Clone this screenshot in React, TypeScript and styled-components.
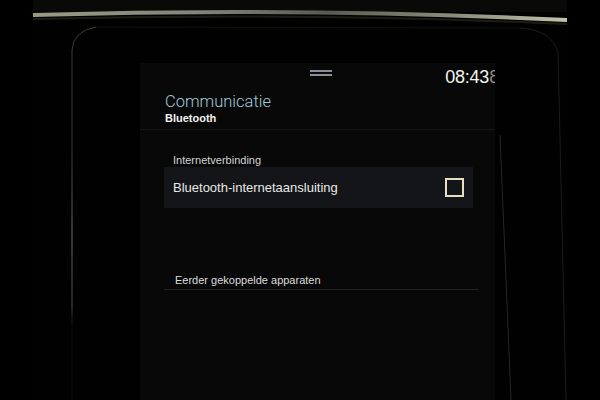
import React from "react";
import styled, { createGlobalStyle } from "styled-components";

const GlobalStyle = createGlobalStyle`
  html, body {
    margin: 0;
    padding: 0;
    background: #000;
  }
  body {
    font-family: "Liberation Sans", Arial, sans-serif;
  }
`;

const App = () => {
  return (
    <>
      <GlobalStyle />
      <Page>
        <Photo>
          <Bezel viewBox="33 0 534 400" aria-hidden>
            <defs>
              <linearGradient id="glare" x1="0" x2="1" y1="0" y2="0">
                <stop offset="0" stopColor="#9a9a84" />
                <stop offset="0.3" stopColor="#85857a" />
                <stop offset="0.55" stopColor="#5a5a50" />
                <stop offset="0.85" stopColor="#9a9a86" />
                <stop offset="1" stopColor="#c4c4ac" />
              </linearGradient>
              <linearGradient id="edge" x1="0" x2="0" y1="0" y2="1">
                <stop offset="0" stopColor="#3a3a34" />
                <stop offset="0.35" stopColor="#3a3a34" />
                <stop offset="0.55" stopColor="#6a6a62" />
                <stop offset="0.75" stopColor="#4a4a44" />
                <stop offset="0.8" stopColor="#0c0c0c" />
              </linearGradient>
            </defs>
            <rect x="33" y="0" width="534" height="12" fill="#090907" />
            <path d="M33 15 Q300 7 567 20" stroke="url(#glare)" strokeWidth="4" fill="none" />
            <path d="M33 19 Q300 12 567 24" stroke="#1c1c17" strokeWidth="2" fill="none" />
            <path d="M72 400 L72 50 Q73 31 96 27" stroke="url(#edge)" strokeWidth="1" fill="none" />
            <path d="M96 27 L520 28" stroke="#111110" strokeWidth="1" fill="none" />
            <path
              d="M520 28 Q552 30 558 52 L566 400"
              stroke="#1c1c1a"
              strokeWidth="1"
              fill="none"
            />
            <path d="M500 135 L511 400" stroke="#262622" strokeWidth="1" fill="none" />
          </Bezel>
          <Screen>
            <TopBar>
              <span />
              <Handle>
                <i />
                <i />
              </Handle>
              <Clock>
                08:43<Faded>8</Faded>
              </Clock>
            </TopBar>
            <Header>
              <Title>Communicatie</Title>
              <Subtitle>Bluetooth</Subtitle>
            </Header>
            <Section>
              <GroupLabel>Internetverbinding</GroupLabel>
              <Row>
                <RowText>Bluetooth-internetaansluiting</RowText>
                <Checkbox />
              </Row>
              <ListHeader>Eerder gekoppelde apparaten</ListHeader>
            </Section>
          </Screen>
        </Photo>
      </Page>
    </>
  );
};

export default App;

const Page = styled.div`
  width: 600px;
  height: 400px;
  display: flex;
  justify-content: center;
  background: #000;
  overflow: hidden;
`;

const Photo = styled.div`
  position: relative;
  width: 534px;
  height: 400px;
  box-sizing: border-box;
  padding: 63px 0 0 107px;
  background: #010101;
  overflow: hidden;
`;

const Bezel = styled.svg`
  position: absolute;
  left: 0;
  top: 0;
  width: 534px;
  height: 400px;
  pointer-events: none;
`;

const Screen = styled.div`
  position: relative;
  width: 355px;
  height: 337px;
  background: #080808;
  display: flex;
  flex-direction: column;
  overflow: hidden;
`;

const TopBar = styled.div`
  display: grid;
  grid-template-columns: 1fr auto 1fr;
  align-items: start;
  height: 30px;
  box-sizing: border-box;
  padding-top: 5px;
`;

const Handle = styled.div`
  display: flex;
  flex-direction: column;
  gap: 1.5px;
  width: 22px;
  margin-top: 2px;
  margin-left: 6px;

  i {
    display: block;
    height: 2px;
    background: #8b9098;
  }
`;

const Clock = styled.div`
  justify-self: end;
  margin-right: -4px;
  font-size: 18px;
  line-height: 18px;
  color: #f4f4ee;
  letter-spacing: -0.2px;
  white-space: nowrap;
`;

const Faded = styled.span`
  color: #8a8a86;
`;

const Header = styled.div`
  display: flex;
  flex-direction: column;
  padding: 0 0 5px 25px;
  border-bottom: 1px solid #161616;
`;

const Title = styled.div`
  font-family: Roboto, "Liberation Sans", sans-serif;
  font-weight: 300;
  font-size: 16.5px;
  line-height: 17px;
  color: #a2cadb;
`;

const Subtitle = styled.div`
  margin-top: 3px;
  font-size: 11px;
  font-weight: 700;
  line-height: 11px;
  color: #f2f2f2;
`;

const Section = styled.div`
  display: flex;
  flex-direction: column;
  padding: 25px 22px 0 24px;
`;

const GroupLabel = styled.div`
  padding-left: 9px;
  font-size: 11px;
  line-height: 11px;
  color: #d4d4d4;
  margin-bottom: 1px;
`;

const Row = styled.div`
  display: flex;
  align-items: center;
  justify-content: space-between;
  height: 41px;
  padding: 0 9px;
  background: #141518;
`;

const RowText = styled.span`
  font-size: 13px;
  line-height: 13px;
  color: #e8e8e6;
`;

const Checkbox = styled.span`
  width: 19px;
  height: 19px;
  box-sizing: border-box;
  border: 2px solid #e6e0c2;
`;

const ListHeader = styled.div`
  margin: 67px -5px 0 0;
  padding: 0 0 3px 11px;
  font-size: 11px;
  line-height: 11px;
  color: #dcdcdc;
  border-bottom: 1px solid #222;
`;
